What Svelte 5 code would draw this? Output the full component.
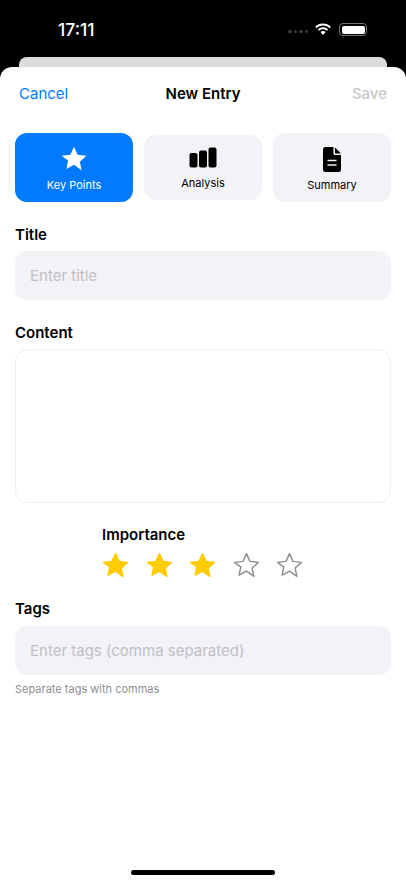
<script lang="ts">
  let title = $state('');
  let content = $state('');
  let tags = $state('');
  let importance = $state(3);
  let entryType = $state('key');

  const types = [
    { id: 'key', label: 'Key Points' },
    { id: 'analysis', label: 'Analysis' },
    { id: 'summary', label: 'Summary' }
  ];
  const star = 'M12 2.2l2.9 6.4 7 .8-5.2 4.7 1.4 6.9L12 16.6l-6.1 3.4 1.4-6.9L2.100 9.400l7-.8z';
</script>

<div class="phone">
  <div class="status">
    <span class="time">17:11</span>
    <div class="status-right">
      <span class="dots"><i></i><i></i><i></i><i></i></span>
      <svg width="18" height="13" viewBox="0 0 18 13" fill="#fff">
        <path d="M9 2.600c2.500 0 4.800 1 6.500 2.600l1.300-1.400C14.700 1.800 12 .6 9 .6S3.300 1.800 1.200 3.800l1.300 1.400C4.200 3.600 6.500 2.600 9 2.600z" />
        <path d="M9 6.300c1.500 0 2.900.6 3.900 1.500l1.300-1.400C12.800 5.100 11 4.300 9 4.300s-3.800.8-5.200 2.100l1.300 1.400c1-.9 2.400-1.500 3.900-1.500z" />
        <path d="M9 8c-1 0-1.800.4-2.500 1L9 12l2.500-3C10.800 8.400 10 8 9 8z" />
      </svg>
      <span class="battery"><span></span></span>
    </div>
  </div>
  <div class="back-card"></div>

  <main class="sheet">
    <header>
      <button class="link">Cancel</button>
      <h1>New Entry</h1>
      <button class="link save" disabled>Save</button>
    </header>

    <div class="types">
      {#each types as t}
        <button class="type {t.id}" class:active={entryType === t.id} onclick={() => (entryType = t.id)}>
          {#if t.id === 'key'}
            <svg width="30" height="30" viewBox="0 0 24 24" fill="currentColor"><path d={star} /></svg>
          {:else if t.id === 'analysis'}
            <svg width="30" height="30" viewBox="0 0 30 30" fill="currentColor">
              <rect x="1.500" y="10" width="8" height="14.500" rx="2" />
              <rect x="11" y="7.500" width="8" height="17" rx="2" />
              <rect x="20.500" y="4.500" width="8" height="20" rx="2" />
            </svg>
          {:else}
            <svg width="30" height="30" viewBox="0 0 30 30">
              <path fill="currentColor" d="M8.500 3h8v6.500a1.500 1.500 0 0 0 1.500 1.500h6v14.500a2.500 2.500 0 0 1-2.500 2.500h-13A2.500 2.500 0 0 1 6 25.500v-20A2.500 2.500 0 0 1 8.500 3zM18 3.500l6 6h-6z" />
              <path stroke="#f2f2f7" stroke-width="1.500" d="M10.500 16.500h9M10.500 21h9" />
            </svg>
          {/if}
          <span>{t.label}</span>
        </button>
      {/each}
    </div>

    <section class="field title-field">
      <label for="title">Title</label>
      <input id="title" placeholder="Enter title" bind:value={title} />
    </section>

    <section class="field content-field">
      <label for="content">Content</label>
      <textarea id="content" bind:value={content}></textarea>
    </section>

    <section class="importance">
      <span class="label">Importance</span>
      <div class="stars">
        {#each [1, 2, 3, 4, 5] as n}
          <button class="star" class:on={n <= importance} aria-label="{n} stars" onclick={() => (importance = n)}>
            <svg width="29" height="29" viewBox="0 0 24 24"><path d={star} /></svg>
          </button>
        {/each}
      </div>
    </section>

    <section class="field tags-field">
      <label for="tags">Tags</label>
      <input id="tags" placeholder="Enter tags (comma separated)" bind:value={tags} />
      <p class="hint">Separate tags with commas</p>
    </section>

    <div class="home"></div>
  </main>
</div>

<style>
  :global(body) {
    background: #000;
    font-family: Inter, 'Liberation Sans', sans-serif;
  }
  .phone {
    height: 883px;
    display: flex;
    flex-direction: column;
    overflow: hidden;
  }
  .status {
    height: 57px;
    flex-shrink: 0;
    display: flex;
    align-items: center;
    justify-content: space-between;
    padding: 2px 39px 0 58px;
    box-sizing: border-box;
    color: #fff;
  }
  .time {
    font-size: 17.500px;
    font-weight: 500;
  }
  .status-right {
    display: flex;
    align-items: center;
    gap: 6px;
  }
  .dots {
    display: flex;
    gap: 2px;
    margin-top: 4px;
  }
  .dots i {
    width: 3.500px;
    height: 3.500px;
    border-radius: 50%;
    background: #3c3c3c;
  }
  .battery {
    width: 28px;
    height: 13px;
    border: 1px solid #777;
    border-radius: 4px;
    box-sizing: border-box;
    padding: 1.500px;
    margin-left: 1px;
    display: flex;
  }
  .battery span {
    flex: 1;
    background: #fff;
    border-radius: 2px;
  }
  .back-card {
    height: 10px;
    flex-shrink: 0;
    margin: 0 19px;
    background: #dcdcdc;
    border-radius: 8px 8px 0 0;
  }
  .sheet {
    flex: 1;
    background: #fff;
    border-radius: 12px 12px 0 0;
    padding: 0 15px;
    display: flex;
    flex-direction: column;
    position: relative;
  }
  header {
    height: 52px;
    display: grid;
    grid-template-columns: 1fr auto 1fr;
    align-items: center;
    padding: 0 4px;
  }
  h1 {
    margin: 0;
    font-size: 15px;
    font-weight: 600;
    color: #000;
  }
  .link {
    background: none;
    border: none;
    padding: 0;
    font: inherit;
    font-size: 15px;
    color: #007aff;
    justify-self: start;
  }
  .link.save {
    color: #c7c7cc;
    font-weight: 500;
    justify-self: end;
  }
  .types {
    margin-top: 14px;
    display: flex;
    gap: 11px;
    align-items: center;
    height: 69px;
  }
  .type {
    flex: 1;
    height: 69px;
    border: none;
    border-radius: 12px;
    background: #f2f2f7;
    color: #000;
    font: inherit;
    font-size: 11px;
    display: flex;
    flex-direction: column;
    align-items: center;
    justify-content: flex-start;
    padding: 10px 0 0;
    gap: 5px;
  }
  .type.key svg,
  .type.summary svg {
    margin-top: 1px;
    margin-bottom: -1px;
  }
  .type.analysis {
    height: 65px;
    padding-top: 8px;
    gap: 3px;
  }
  .type.active {
    background: #007aff;
    color: #fff;
  }
  .field label,
  .label {
    display: block;
    font-size: 15px;
    font-weight: 600;
    color: #000;
    line-height: 18px;
  }
  .title-field {
    margin-top: 24px;
  }
  .content-field {
    margin-top: 24px;
  }
  .field input {
    display: block;
    width: 100%;
    height: 49px;
    margin-top: 7px;
    box-sizing: border-box;
    border: none;
    outline: none;
    border-radius: 12px;
    background: #f2f2f7;
    padding: 0 15px;
    font: inherit;
    font-size: 15px;
    color: #000;
  }
  .field input::placeholder {
    color: #c0c0c6;
  }
  .tags-field input {
    margin-top: 8px;
  }
  textarea {
    display: block;
    width: 100%;
    height: 154px;
    margin-top: 7px;
    box-sizing: border-box;
    border: 1.500px solid #eeeef1;
    outline: none;
    border-radius: 12px;
    background: #fff;
    resize: none;
  }
  .importance {
    margin-top: 23px;
    padding-left: 87px;
  }
  .stars {
    display: flex;
    gap: 14.500px;
    margin-top: 6px;
    margin-left: -1px;
  }
  .star {
    background: none;
    border: none;
    padding: 0;
    width: 29px;
    height: 30px;
  }
  .star svg {
    display: block;
    fill: none;
    stroke: #8e8e93;
    stroke-width: 1.200;
    stroke-linejoin: round;
  }
  .star.on svg {
    fill: #ffcc00;
    stroke: #ffcc00;
  }
  .tags-field {
    margin-top: 20px;
  }
  .hint {
    margin: 7px 0 0;
    font-size: 11px;
    line-height: 14px;
    color: #8e8e93;
  }
  .home {
    position: absolute;
    left: 131px;
    bottom: 8px;
    width: 144px;
    height: 5px;
    border-radius: 3px;
    background: #000;
  }
</style>
